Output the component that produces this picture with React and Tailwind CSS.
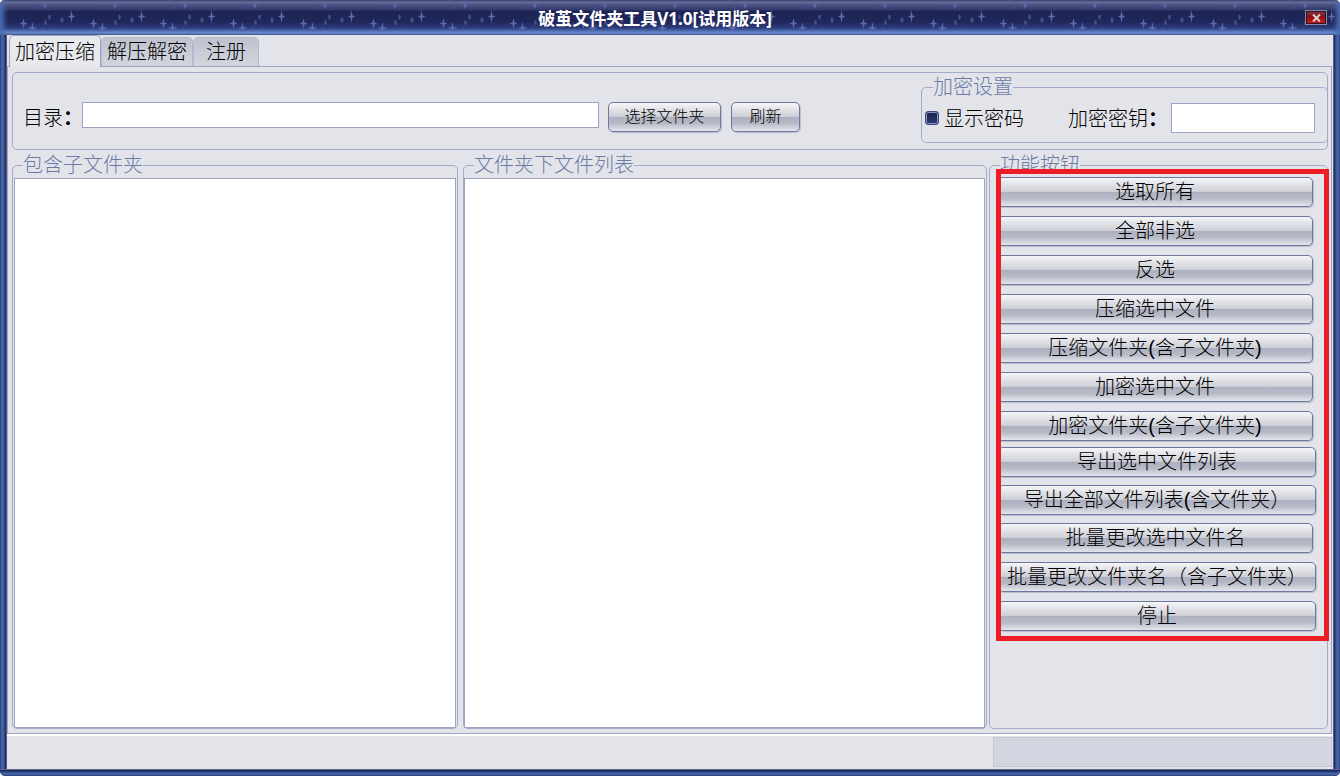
import { useState } from 'react';

const mainActions = [
  '选取所有',
  '全部非选',
  '反选',
  '压缩选中文件',
  '压缩文件夹(含子文件夹)',
  '加密选中文件',
  '加密文件夹(含子文件夹)',
];

const tabs = ['加密压缩', '解压解密', '注册'];

const glossy =
  'bg-[linear-gradient(#f6f6f8_0%,#e0e1e6_25%,#d0d1d9_48%,#adb0be_50%,#b6b9c6_72%,#e4e6ec_100%)] border border-[#6e779e] rounded-[5px] shadow-[1px_1px_1px_#b9bccb] text-black';

export default function App() {
  const [active, setActive] = useState(0);

  return (
    <div className="h-screen flex flex-col rounded-[5px] overflow-hidden bg-[#26306a] font-['Liberation_Sans','Noto_Sans_CJK_SC',sans-serif] text-xl leading-5 text-black">
      <TitleBar />

      <div className="flex-1 min-h-0 flex">
        <div className="w-[7px] bg-[linear-gradient(to_right,#2c3c78,#4a6cb0_30%,#35508f_60%,#1c2455_85%,#8a8fb0)]" />

        <div className="flex-1 min-w-0 flex flex-col bg-[#e3e4e9]">
          <nav className="flex items-end h-[31px] pl-0.5">
            {tabs.map((tab, i) => (
              <Tab key={tab} label={tab} active={active === i} onClick={() => setActive(i)} />
            ))}
          </nav>

          <main className="flex-1 min-h-0 flex flex-col border border-[#9ca3c4] mr-px pt-[5px] pl-1 pr-[3px] pb-1">
            <div className="h-[78px] shrink-0 flex border border-[#a3abc9] rounded-[5px]">
              <div className="flex items-start pl-2.5 pt-[29px] flex-1 min-w-0">
                <label htmlFor="dir" className="w-[59px] pt-1.5 shrink-0 whitespace-nowrap font-light">
                  目录<span className="font-bold">：</span>
                </label>
                <input id="dir" className="h-[26px] w-[517px] min-w-0 bg-white border border-[#9ca3c4] px-1 text-base outline-none" />
                <button className={`ml-[9px] h-[30px] w-[113px] shrink-0 text-base font-light ${glossy}`}>选择文件夹</button>
                <button className={`ml-2.5 h-[30px] w-[69px] shrink-0 text-base font-light ${glossy}`}>刷新</button>
              </div>

              <fieldset className="w-[407px] h-[66px] mt-1 -mr-px shrink-0 border border-[#a3abc9] rounded-[5px] pl-[3px]">
                <legend className="ml-2 font-light text-[#6b7ba6]">加密设置</legend>
                <div className="flex items-center mt-1.5 h-[30px]">
                  <input
                    id="show"
                    type="checkbox"
                    className="appearance-none size-3.5 rounded-[3px] border border-[#3a487c] bg-[linear-gradient(#1c2450,#2c3a74)] shadow-[inset_0_0_0_1px_#7f93c4]"
                  />
                  <label htmlFor="show" className="ml-[5px] pt-0.5 font-light">显示密码</label>
                  <label htmlFor="key" className="ml-11 pt-0.5 w-[103px] whitespace-nowrap font-light">
                    加密密钥<span className="font-bold">：</span>
                  </label>
                  <input id="key" className="h-[30px] w-36 bg-white border border-[#9ca3c4] px-1 text-base outline-none" />
                </div>
              </fieldset>
            </div>

            <div className="flex-1 min-h-0 flex mt-[5px]">
              <Group title="包含子文件夹" className="w-[446px] shrink-0">
                <div className="flex-1 mt-[3px] mx-px bg-white border border-[#9ca3c4]" />
              </Group>
              <Group title="文件夹下文件列表" className="flex-1 min-w-0 ml-[5px]">
                <div className="flex-1 mt-[3px] mr-px bg-white border border-[#9ca3c4]" />
              </Group>
              <Group title="功能按钮" className="relative w-[339px] shrink-0 ml-0.5">
                <div className="flex flex-col gap-[9px] pt-0.5 pl-[7px] pr-3.5">
                  {mainActions.map((text) => (
                    <Action key={text} text={text} />
                  ))}
                </div>
                <div className="flex flex-col gap-2 mt-1.5 pl-2 pr-[11px]">
                  <Action text="导出选中文件列表" />
                  <Action text="导出全部文件列表(含文件夹）" />
                  <Action text="批量更改选中文件名" className="mr-[3px]" />
                </div>
                <div className="flex flex-col gap-[9px] mt-[9px] pl-2 pr-[11px]">
                  <Action text="批量更改文件夹名（含子文件夹）" />
                  <Action text="停止" />
                </div>
                {/* highlight frame over the button column */}
                <div className="absolute left-1.5 -right-0.5 -top-1.5 h-[472px] border-[5px] border-[#ee1c25] pointer-events-none" />
              </Group>
            </div>
          </main>

          <footer className="h-[35px] shrink-0 flex justify-end border-t-2 border-white pt-px pb-0.5 pr-px">
            <div className="w-[339px] bg-[#d3d6e1] border border-[#c3c6d3]" />
          </footer>
        </div>

        <div className="w-[7px] bg-[linear-gradient(to_left,#2c3c78,#4a6cb0_30%,#35508f_60%,#1c2455_85%,#8a8fb0)]" />
      </div>

      <div className="h-[7px] shrink-0 bg-[linear-gradient(to_top,#2c3c78,#4a6cb0_30%,#35508f_50%,#1c2455_80%,#8a8fb0)]" />
    </div>
  );
}

function TitleBar() {
  return (
    <header className="relative h-[35px] shrink-0 flex items-center justify-center shadow-[inset_7px_0_5px_-3px_#4a6cb0,inset_-7px_0_5px_-3px_#4a6cb0] bg-[linear-gradient(#2c3668_0px,#6a7095_2px,#4a5080_5px,#32396b_10px,#1d2452_11px,#20285a_22px,#2c3c7c_28px,#4f70b4_31px,#6a90cc_33px,#3c4c88_35px)]">
      <svg className="absolute inset-0 size-full" aria-hidden="true">
        <defs>
          <pattern id="stars" width="70" height="35" patternUnits="userSpaceOnUse">
            <g fill="#5a69b0">
              <path d="M45 2l1 3 3 .5-3 .5-1 3-1-3-3-.5 3-.5z" />
              <path d="M1.500 10l1 5.500 3 1-3 1-1 5.500-1-5.500-3-1 3-1z" />
              <path d="M71.500 10l1 5.500 3 1-3 1-1 5.500-1-5.500-3-1 3-1z" />
              <path d="M23.500 18l1 4.500 3 1-3 1-1 4.500-1-4.500-3-1 3-1z" />
              <path d="M32.500 22l1 5 4 1-4 1-1 4-1-4-4-1 4-1z" />
            </g>
            <g fill="#43508f">
              <circle cx="24.500" cy="4.500" r="1" />
              <circle cx="34.500" cy="7.500" r="1.300" />
              <ellipse cx="49.500" cy="17" rx="1.300" ry="2.500" />
              <ellipse cx="45.500" cy="22.500" rx="1.300" ry="2.500" />
              <ellipse cx="62" cy="20" rx="1.600" ry="2.800" />
              <circle cx="43.500" cy="29" r="1.300" />
              <circle cx="52.500" cy="29" r="1.300" />
            </g>
          </pattern>
        </defs>
        <rect x="12" width="100%" height="100%" fill="url(#stars)" />
      </svg>
      <h1 className="relative mr-[30px] pt-0.5 text-[17px] font-bold text-white whitespace-nowrap font-['Noto_Sans','Noto_Sans_CJK_SC',sans-serif]">
        破茧文件夹工具V1.0[试用版本]
      </h1>
      <button
        aria-label="关闭"
        className="absolute right-[13px] top-2.5 w-[22px] h-[15px] flex items-center justify-center border border-[#7d8bb0] bg-[linear-gradient(#8a3a40,#7c1418_45%,#a01010_50%,#c82018)] shadow-[inset_0_0_0_1px_#3a1020]"
      >
        <svg width="9" height="8" viewBox="0 0 9 8" stroke="#e6d8d8" strokeWidth="1.800">
          <path d="M1 .5l7 7M8 .5l-7 7" />
        </svg>
      </button>
    </header>
  );
}

function Tab({ label, active, onClick }) {
  return (
    <button
      onClick={onClick}
      className={`border border-b-0 rounded-t-[5px] font-light whitespace-nowrap ${
        active
          ? 'relative h-8 -mb-px px-[5px] bg-[#e8e9ed] border-[#9ca3c4]'
          : 'h-[29px] px-[5px] last:px-3 bg-[linear-gradient(#bfc2ce,#d3d5de)] border-[#b4b9cf]'
      }`}
    >
      {label}
    </button>
  );
}

function Group({ title, className = '', children }) {
  return (
    <fieldset className={`flex flex-col border border-[#a3abc9] rounded-[5px] ${className}`}>
      <legend className="ml-2.5 font-light text-[#6b7ba6]">{title}</legend>
      {children}
    </fieldset>
  );
}

function Action({ text, className = '' }) {
  return (
    <button className={`h-[30px] shrink-0 font-light whitespace-nowrap ${glossy} ${className}`}>
      {text}
    </button>
  );
}
